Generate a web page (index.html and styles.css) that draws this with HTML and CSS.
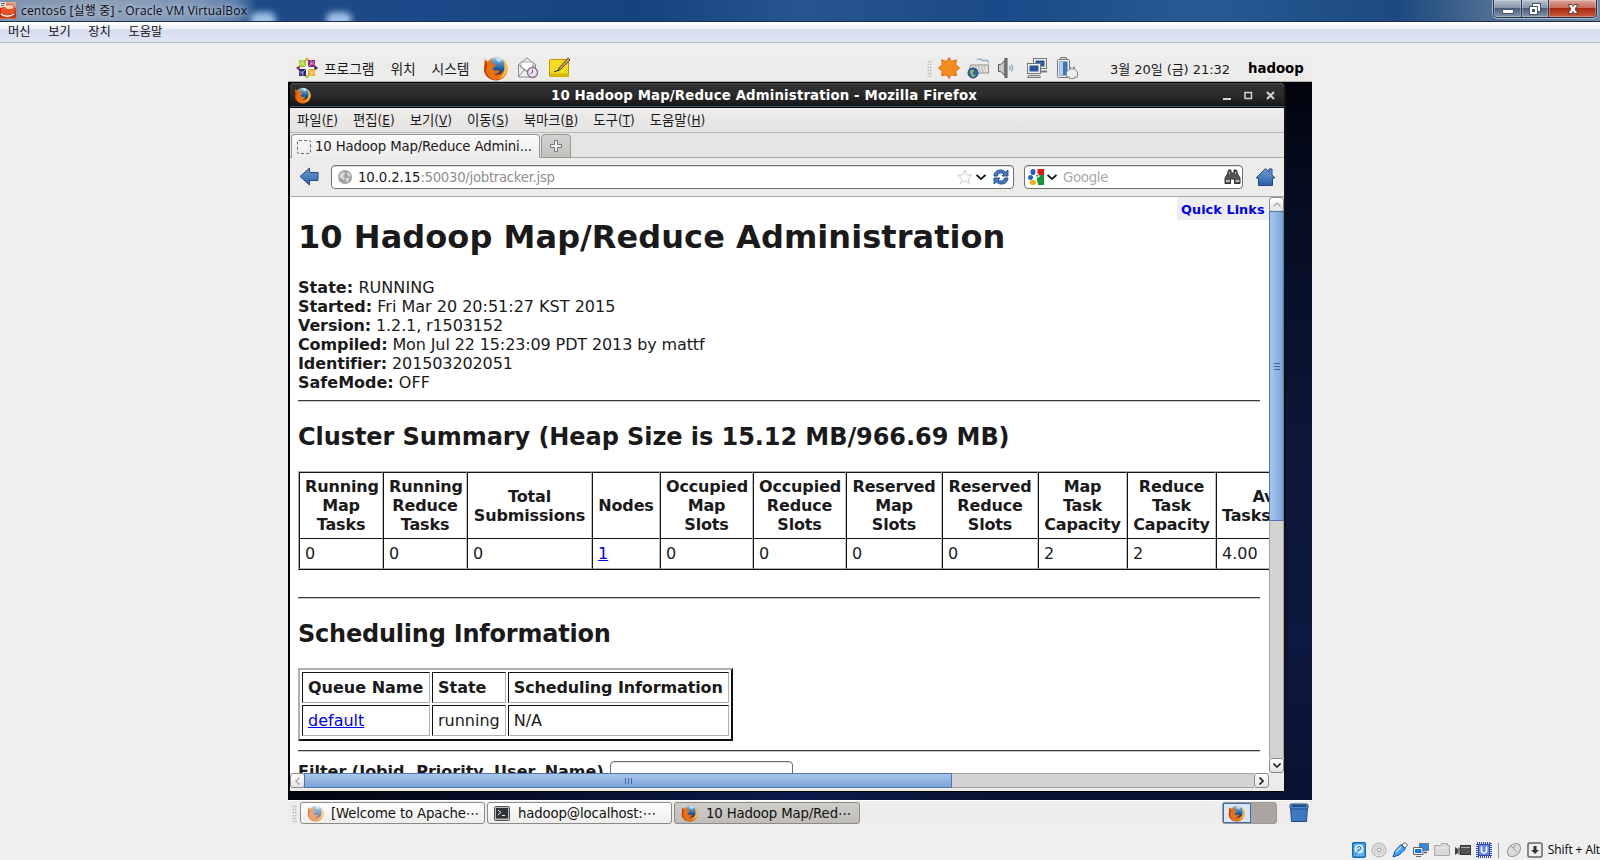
FILE: index.html
```html
<!DOCTYPE html>
<html lang="ko">
<head>
<meta charset="utf-8">
<title>centos6 - Oracle VM VirtualBox</title>
<link rel="stylesheet" href="styles.css">
</head>
<body>
<svg width="0" height="0" class="defs" aria-hidden="true">
  <defs>
    <linearGradient id="gOrange" x1="0" y1="0" x2="0" y2="1"><stop offset="0" stop-color="#f39a2b"/><stop offset="1" stop-color="#d0430b"/></linearGradient>
    <linearGradient id="gGlobe" x1="0" y1="0" x2="0" y2="1"><stop offset="0" stop-color="#8fcbf0"/><stop offset=".6" stop-color="#2463b0"/><stop offset="1" stop-color="#0f2f70"/></linearGradient>
    <linearGradient id="gBlue" x1="0" y1="0" x2="0" y2="1"><stop offset="0" stop-color="#6f9fd6"/><stop offset="1" stop-color="#2a60a5"/></linearGradient>
    <symbol id="firefox" viewBox="0 0 24 24">
      <circle cx="12.500" cy="12.500" r="11" fill="url(#gOrange)"/>
      <circle cx="13" cy="9.500" r="8.300" fill="url(#gGlobe)"/>
      <path d="M11 2c3-1 6 0 8 2-2 0-3 1-4 2-2-1-1-3-4-4z" fill="#c8e6f8"/>
      <path d="M19.500 3.500c3.500 3 5 8 3 12.500-2 4.500-7 7-12 6 6-1 10-4 10-11 0-3-.5-5-1-7.500z" fill="#f9bf36"/>
      <path d="M1.500 3C3 4 4 5 5 5.500 7 4 9 4 10 4.500 8.500 6 8.500 7 9 8l3.500.5c0 1.500-2 2-3 2.500-.5 2 1 3.500 4 3 1-.2 2 0 2.500.5-1 2-3 3-5.500 2.500 2 2.500 6 2 8.500-1-1 4.500-5 7-9.500 6.500C4 22 .5 16 1.500 10z" fill="#e8720f"/>
      <path d="M2 4l2 4-1 6c0 4 3 7 7 9C5 22 1 18 1 13z" fill="#c23c0a"/>
    </symbol>
  </defs>
</svg>

<header class="host-title">
  <svg class="vb-icon" width="16" height="18" viewBox="0 0 16 18"><rect x="0" y="1" width="16" height="17" fill="#d8a58f"/><path d="M0 7h16v10.500H0z" fill="#c8330c"/><path d="M1 11c0-5 3-8 8-8s7 3 6.500 6-5 4.500-8.500 4.500S1 13 1 11z" fill="#e8532a"/><ellipse cx="9.500" cy="6" rx="4" ry="2" fill="#ffd2bb"/><path d="M1 13c3 3 9 3 13 0" stroke="#fff" stroke-width="1.500" fill="none"/><path d="M0 1h6v5H0z" fill="#e9e2dc"/><path d="M1 2.500h4M1 4.500h3" stroke="#666"/></svg>
  <span class="host-caption">centos6 [실행 중] - Oracle VM VirtualBox</span>
  <span class="cloud"></span><span class="cloud"></span>
  <div class="win-buttons">
    <span class="wb min"><svg width="14" height="12" viewBox="0 0 14 12"><rect x="1.500" y="6.500" width="11" height="4" fill="#fff" stroke="#4a5468"/></svg></span>
    <span class="wb res"><svg width="14" height="14" viewBox="0 0 14 14"><rect x="4.500" y="1.500" width="8" height="8" fill="#fff" stroke="#4a5468"/><rect x="1.500" y="4.500" width="8" height="8" fill="#fff" stroke="#4a5468"/><rect x="4.500" y="7.500" width="2" height="2" fill="#4a5468" stroke="#4a5468"/></svg></span>
    <span class="wb close"><svg width="14" height="12" viewBox="0 0 14 12"><path d="M2 1.500h3.500L7 3.500l1.500-2H12L9 6l3 4.500H8.500L7 8.500l-1.500 2H2L5 6z" fill="#fff" stroke="#5a3a3e"/></svg></span>
  </div>
</header>
<nav class="host-menu"><span>머신</span><span>보기</span><span>장치</span><span>도움말</span></nav>

<main class="host-body">
<section class="guest">
  <div class="panel top">
    <svg class="centos" width="22" height="22" viewBox="0 0 22 22">
      <path d="M11 0l3 4H8z" fill="#efa724"/><path d="M8 18h6l-3 4z" fill="#9ccd2a"/><path d="M0 11l4-3v6z" fill="#932279"/><path d="M22 11l-4-3v6z" fill="#262577"/>
      <path d="M3 3h7v7H3z" fill="#9ccd2a"/><path d="M12 3h7v7h-7z" fill="#932279"/><path d="M3 12h7v7H3z" fill="#262577"/><path d="M12 12h7v7h-7z" fill="#efa724"/>
      <path d="M4 4l14 14M18 4L4 18M11 3v16M3 11h16M7 3v4H3M15 3v4h4M7 19v-4H3M15 19v-4h4" stroke="#fff" stroke-width=".8" fill="none" opacity=".7"/>
    </svg>
    <div class="gmenu"><span>프로그램</span><span>위치</span><span>시스템</span></div>
    <svg class="launch l1" width="25" height="25"><use href="#firefox"/></svg>
    <svg class="launch l2" width="22" height="22" viewBox="0 0 22 22"><path d="M1.500 7.500L10 1l8.500 6.500V20h-17z" fill="#eee" stroke="#8b8d89"/><path d="M4 5h12v6l-6 4-6-4z" fill="#fff" stroke="#aaa"/><path d="M1.500 19.500L8 12M2 8l8 6 8-6" stroke="#8b8d89" fill="none"/><circle cx="15.500" cy="15.500" r="5" fill="#eee3f1" stroke="#8a6a94" stroke-width="1.300"/><path d="M15.500 12.500v3l-2 1" stroke="#75507b" fill="none"/></svg>
    <svg class="launch l3" width="22" height="22" viewBox="0 0 22 22"><rect x=".5" y="2.500" width="19" height="17" rx="1" fill="#f7dc1e" stroke="#b59a06"/><path d="M1 16.500h19V20H1z" fill="#d4b606"/><path d="M9 14l1-3L19 1l2 2-9 9z" fill="#c6a25c" stroke="#5c4a20"/><path d="M5 15l5-2" stroke="#222"/></svg>
    <div class="tray">
      <span class="grip"></span>
      <svg class="t1" width="22" height="22" viewBox="0 0 22 22"><path d="M11 .7l2.500 3.800 4.900-1.600-.8 4.700 3.900 3.400-3.900 3 .8 4.700-4.900-.9L11 21.300l-2.500-3.500-4.900.9.800-4.700L.5 11l3.900-3.400-.8-4.700 4.900 1.600z" fill="#f68b1f" stroke="#d8690a"/></svg>
      <svg class="t2" width="23" height="22" viewBox="0 0 23 22"><path d="M10 2.500c4-2 4 2 8 1 4-1 2 1 4 2" stroke="#8fb0d8" fill="none" stroke-width="1.500"/><path d="M3.500 8h18v8h-20z" fill="#e8e8e6" stroke="#8b8d89"/><path d="M5 10h15M4.500 12h15M9 14h10" stroke="#a5a6a2" stroke-dasharray="2 1"/><circle cx="6" cy="16" r="5" fill="#3465a4" stroke="#204a87"/><path d="M3 14c2-2 4-1 4 0s-2 1-1 3 3 0 3 0-1 3-3 3-1-3-3-4z" fill="#8ac34a"/></svg>
      <svg class="t3" width="18" height="22" viewBox="0 0 18 22"><path d="M1.500 7.500h2L8 3.500v15l-4.500-4h-2z" fill="#c9cac7" stroke="#555753"/><rect x="8" y="1.500" width="2" height="19" fill="#888a85" stroke="#555753"/><path d="M12.500 9q1.500 2 0 4M14.500 7.500q2.500 3.500 0 7" stroke="#5f8fcb" fill="none"/></svg>
      <svg class="t4" width="22" height="22" viewBox="0 0 22 22"><rect x="7.500" y="1.500" width="13" height="10" fill="#eeeeec" stroke="#777"/><rect x="9.500" y="3.500" width="9" height="6" fill="#28559c"/><path d="M15 14.500h6" stroke="#777" stroke-width="2"/><rect x="1.500" y="6.500" width="13" height="10" fill="#eeeeec" stroke="#777"/><rect x="3.500" y="8.500" width="9" height="6" fill="#28559c"/><path d="M1.500 20.500l1-2h11l1 2z" fill="#ddd" stroke="#777"/></svg>
      <svg class="t5" width="22" height="22" viewBox="0 0 22 22"><path d="M4.500 2.500v-2h6v2" fill="#ddd" stroke="#777"/><rect x="1.500" y="2.500" width="12" height="18" rx="1" fill="#eee" stroke="#777"/><rect x="3.500" y="4.500" width="8" height="14" fill="#3f74b7"/><path d="M4 5h3v13H4z" fill="#b5cdea"/><path d="M10.500 20v-5l3-3v-2h1v2h3v-2h1v2l3 3v5h-3v1.500h-5V20z" fill="#eee" stroke="#888"/></svg>
    </div>
    <span class="clock">3월 20일 (금) 21:32</span>
    <b class="user">hadoop</b>
  </div>

  <div class="desktop">
    <div class="window">
      <div class="titlebar">
        <svg class="tb-icon" width="17" height="17"><use href="#firefox"/></svg>
        <b>10 Hadoop Map/Reduce Administration - Mozilla Firefox</b>
        <svg class="tb-buttons" width="56" height="12" viewBox="0 0 56 12"><g fill="none" stroke="#d3d3cf" stroke-width="2"><path d="M1 10h8"/><rect x="23" y="3.500" width="6.500" height="6" stroke-width="1.500"/><path d="M45 3l7 7M52 3l-7 7"/></g></svg>
      </div>
      <div class="ff-menu">
        <span>파일(<u>F</u>)</span><span>편집(<u>E</u>)</span><span>보기(<u>V</u>)</span><span>이동(<u>S</u>)</span><span>북마크(<u>B</u>)</span><span>도구(<u>T</u>)</span><span>도움말(<u>H</u>)</span>
      </div>
      <div class="tabs">
        <div class="tab"><i class="blank-icon"></i>10 Hadoop Map/Reduce Admini...</div>
        <div class="newtab"><svg width="12" height="12" viewBox="0 0 12 12"><path d="M4.500.5h3v4h4v3h-4v4h-3v-4h-4v-3h4z" fill="#eee" stroke="#777"/></svg></div>
      </div>
      <div class="navbar">
        <svg class="back" width="20" height="20" viewBox="0 0 20 20"><path d="M1 9.500L10.500 1v4.500H19v8h-8.500V18z" fill="url(#gBlue)" stroke="#204a87"/></svg>
        <div class="urlbox">
          <svg width="14" height="14" viewBox="0 0 14 14"><circle cx="7" cy="7" r="7" fill="#a3a3a1"/><path d="M1 7l2-4 3-1 1 2-2 2 2 2-1 2-3-2zM9 2l3 2v3l-2-1zM8 8l3 0-1 4-2-1z" fill="#dedddb"/></svg>
          <span class="url">10.0.2.15<em>:50030/jobtracker.jsp</em></span>
          <svg width="16" height="16" viewBox="0 0 16 16"><path d="M8 1l2 5h5l-4 3.500 1.500 5L8 11.500l-4.500 3 1.500-5L1 6h5z" fill="#fff" stroke="#ccc"/></svg>
          <svg class="chev" width="10" height="6" viewBox="0 0 10 6"><path d="M.5 1L5 5l4.500-4" fill="none" stroke="#1a1a1a" stroke-width="1.800"/></svg>
          <svg class="reload" width="16" height="16" viewBox="0 0 16 16"><path d="M1 7C1 1 9-1 12.500 3L15 1v6H9l2-2C8 3 5 4 4.500 7zM15 9c0 6-8 8-11.500 4L1 15V9h6l-2 2c3 2 6 1 6.500-2z" fill="#4a78bd" stroke="#1e478b" stroke-width=".9"/></svg>
        </div>
        <div class="searchbox">
          <svg width="16" height="16" viewBox="0 0 16 16"><rect width="16" height="16" fill="#fff"/><path d="M9 0h7v6H9z" fill="#e11"/><path d="M8 6h8v10H10z" fill="#119a3a"/><ellipse cx="5" cy="3" rx="2.500" ry="3" fill="#2455c9"/><ellipse cx="2.500" cy="8.500" rx="2.500" ry="2.500" fill="#2465d0"/><ellipse cx="5" cy="13.500" rx="3.500" ry="2.500" fill="#f6b21b"/><path d="M9 0v5l2 1v2H8l1 8" fill="none" stroke="#fff"/></svg>
          <svg class="chev" width="10" height="6" viewBox="0 0 10 6"><path d="M.5 1L5 5l4.500-4" fill="none" stroke="#1a1a1a" stroke-width="1.800"/></svg>
          <span class="ph">Google</span>
          <svg width="17" height="16" viewBox="0 0 17 16"><path d="M4.500 1h2.500v3h3V1h2.500l1 4L16 9v5.500h-5.500V10h-4v4.500H1V9l2.500-4z" fill="#555753" stroke="#2e3436"/><path d="M2 12h4M11.500 12h4M5 4h1M11 4h1" stroke="#d3d7cf" stroke-width="1.500"/></svg>
        </div>
        <svg class="home" width="21" height="20" viewBox="0 0 21 20"><path d="M3.500 18.500V11H1l9.500-9.500L14 5V2h3v6l3 3h-2.500v7.500z" fill="url(#gBlue)" stroke="#204a87"/></svg>
      </div>

      <div class="viewport">
        <div class="page">
          <a class="quick">Quick Links</a>
          <h1>10 Hadoop Map/Reduce Administration</h1>
          <div class="info">
            <div class="loose"><b>State:</b> RUNNING</div>
            <div><b>Started:</b> Fri Mar 20 20:51:27 KST 2015</div>
            <div class="tight"><b>Version:</b> 1.2.1, r1503152</div>
            <div class="tight"><b>Compiled:</b> Mon Jul 22 15:23:09 PDT 2013 by mattf</div>
            <div class="tight"><b>Identifier:</b> 201503202051</div>
            <div><b>SafeMode:</b> OFF</div>
          </div>
          <hr>
          <h2>Cluster Summary (Heap Size is 15.12 MB/966.69 MB)</h2>
          <table class="cluster">
            <colgroup><col class="w84"><col class="w84"><col class="w125"><col class="w68"><col class="w93"><col class="w93"><col class="w96"><col class="w96"><col class="w89"><col class="w89"><col class="w112"></colgroup>
            <tr><th>Running Map Tasks</th><th>Running Reduce Tasks</th><th>Total Submissions</th><th>Nodes</th><th>Occupied Map Slots</th><th>Occupied Reduce Slots</th><th>Reserved Map Slots</th><th>Reserved Reduce Slots</th><th>Map Task Capacity</th><th>Reduce Task Capacity</th><th>Avg. Tasks/Node</th></tr>
            <tr><td>0</td><td>0</td><td>0</td><td><a>1</a></td><td>0</td><td>0</td><td>0</td><td>0</td><td>2</td><td>2</td><td>4.00</td></tr>
          </table>
          <hr class="second">
          <h2 class="tighter">Scheduling Information</h2>
          <table class="sched">
            <tr><th>Queue Name</th><th>State</th><th>Scheduling Information</th></tr>
            <tr><td><a>default</a></td><td>running</td><td>N/A</td></tr>
          </table>
          <hr class="third">
          <div class="filter"><b>Filter (Jobid, Priority, User, Name)</b><span class="field"></span></div>
        </div>
        <div class="vscroll">
          <span class="sbtn"><svg width="8" height="5" viewBox="0 0 8 5"><path d="M.5 4.500L4 1l3.500 3.500" fill="none" stroke="#aaa" stroke-width="1.400"/></svg></span>
          <span class="vthumb"><i></i></span><span class="vtrack"></span>
          <span class="sbtn"><svg width="8" height="5" viewBox="0 0 8 5"><path d="M.5.5L4 4 7.500.5" fill="none" stroke="#222" stroke-width="1.600"/></svg></span>
        </div>
        <div class="hscroll">
          <span class="sbtn"><svg width="5" height="8" viewBox="0 0 5 8"><path d="M4.500.5L1 4l3.500 3.500" fill="none" stroke="#aaa" stroke-width="1.400"/></svg></span>
          <span class="hthumb"><i></i></span><span class="htrack"></span>
          <span class="sbtn"><svg width="5" height="8" viewBox="0 0 5 8"><path d="M.5.5L4 4 .5 7.500" fill="none" stroke="#222" stroke-width="1.600"/></svg></span>
        </div>
      </div>
    </div>
  </div>

  <div class="panel bottom">
    <span class="grip"></span>
    <div class="task"><svg class="faded" width="17" height="17"><use href="#firefox"/></svg><span>[Welcome to Apache⋯</span></div>
    <div class="task"><svg width="16" height="15" viewBox="0 0 16 15"><rect x=".5" y=".5" width="15" height="14" rx="1" fill="#bbb" stroke="#555"/><rect x="2" y="2" width="12" height="10.500" fill="#2e3436"/><path d="M4 4l3 2.500L4 9M8 9.500h3" stroke="#eee" fill="none"/></svg><span>hadoop@localhost:⋯</span></div>
    <div class="task active"><svg width="17" height="17"><use href="#firefox"/></svg><span>10 Hadoop Map/Red⋯</span></div>
    <div class="pager"><span class="ws on"><svg width="17" height="17"><use href="#firefox"/></svg></span><span class="ws"></span></div>
    <svg class="trash" width="20" height="20" viewBox="0 0 20 20"><path d="M1.500 4l1 14.500h15L18.500 4z" fill="#3e78c0" stroke="#204a87"/><rect x="1" y="1" width="18" height="5" rx="1.500" fill="#4e86c9" stroke="#204a87"/><path d="M3 3h14" stroke="#183a6b" stroke-width="1.500"/></svg>
  </div>
</section>
</main>

<footer class="host-status">
  <svg width="14" height="16" viewBox="0 0 14 16"><rect x=".75" y=".75" width="12.500" height="14.500" rx="1" fill="#5fb4ee" stroke="#1269b5" stroke-width="1.500"/><circle cx="7" cy="7" r="4" fill="#bfe2fa" stroke="#fff"/><path d="M3 13l4-5M5 6c1-2 4-2 4 0s-3 3-3 1" stroke="#1269b5" fill="none"/></svg>
  <svg width="16" height="16" viewBox="0 0 16 16"><circle cx="8" cy="8" r="7" fill="#e3e3e3" stroke="#aaa"/><circle cx="8" cy="8" r="2" fill="#f5f5f5" stroke="#999"/><circle cx="8" cy="8" r="4.500" fill="none" stroke="#c5c5c5"/></svg>
  <svg width="16" height="16" viewBox="0 0 16 16"><path d="M10 3l3-2.500L15.500 3 13 6z" fill="#fff" stroke="#555"/><path d="M1 15l2-6 6-6.500L13.500 7 7 13z" fill="#44a5f0" stroke="#1356a6"/><path d="M4 10l5-5" stroke="#bfe2ff" stroke-width="1.500"/></svg>
  <svg width="16" height="16" viewBox="0 0 16 16"><rect x="6.500" y="1.500" width="9" height="7" fill="#2a8cf0" stroke="#7b7b7b"/><path d="M11 10.500h3" stroke="#555" stroke-width="1.500"/><path d="M.5 5.500h9.500v7H.5z" fill="#1678ea" stroke="#666"/><path d="M1.500 6.500h7.500v5H1.500z" fill="none" stroke="#fff"/><path d="M3 14.500h5" stroke="#666"/></svg>
  <svg width="16" height="16" viewBox="0 0 16 16"><path d="M.5 13.500v-10h6l1-2h6v2h2v10z" fill="#d8d8d8" stroke="#aaa"/><path d="M2 6h12" stroke="#eee"/></svg>
  <svg width="16" height="16" viewBox="0 0 16 16"><path d="M0 5l3 2v4l-3 2z" fill="#444"/><path d="M3 5.500h2v7H3z" fill="#888"/><rect x="5.500" y="3.500" width="10" height="9" fill="#555" stroke="#333"/><path d="M6 5.500h9" stroke="#aaa"/></svg>
  <svg width="16" height="16" viewBox="0 0 16 16"><rect x="1" y="1" width="14" height="14" fill="none" stroke="#3948a8" stroke-width="2" stroke-dasharray="1 1"/><rect x="2.500" y="2.500" width="11" height="11" fill="#6488e6" stroke="#3246b3"/><path d="M5.500 4.500v5q2.500 3 5 0v-5" stroke="#fff" stroke-width="1.700" fill="none"/></svg>
  <i class="sep"></i>
  <svg width="16" height="16" viewBox="0 0 16 16"><ellipse cx="8" cy="8" rx="5.500" ry="7.500" transform="rotate(45 8 8)" fill="#dcdcdc" stroke="#999"/><path d="M5 4l6 6M10 3L7 6" stroke="#999"/></svg>
  <svg width="16" height="16" viewBox="0 0 16 16"><rect x="1" y="1" width="14" height="14" rx="1.500" fill="#eee" stroke="#666" stroke-width="1.500"/><path d="M6.500 4h3v4H12l-4 4-4-4h2.500z" fill="#333"/></svg>
  <span>Shift + Alt</span>
</footer>
</body>
</html>
```
FILE: styles.css
```css
* { box-sizing: border-box; }
body { margin: 0; width: 1600px; height: 860px; overflow: hidden; background: #efefef; font-family: "DejaVu Sans", "Noto Sans CJK KR", sans-serif; color: #1a1a1a; display: flex; flex-direction: column; position: relative; }
svg { display: block; flex: none; }
.defs { position: absolute; }

/* host window */
.host-title { height: 22px; display: flex; align-items: flex-start; overflow: hidden; border-bottom: 1px solid #1a2c47; background: linear-gradient(90deg, #7e92ad 0, #8b9db6 120px, #7892b4 200px, #5a7da9 236px, #1d4a86 258px, #1c4a88 420px, #14437f 640px, #27558f 800px, #1a4a87 1000px, #285a94 1200px, #1c4a80 1400px, #5b7595 1510px, #7088a5 1600px); }
.vb-icon { margin-top: 1px; }
.host-caption { margin-left: 5px; width: 229px; font: 12px/21px "Open Sans", "Noto Sans CJK KR", sans-serif; letter-spacing: .18px; white-space: nowrap; color: #0c0c12; text-shadow: 0 0 5px #c4d0e0, 0 0 8px #c4d0e0; }
.cloud { width: 26px; height: 16px; margin: 12px 50px 0 0; border-radius: 10px; background: #9fc0e6; filter: blur(3px); }
.win-buttons { margin-left: auto; margin-right: 3px; display: flex; height: 18px; border: 1px solid #25354d; border-top: 0; border-radius: 0 0 5px 5px; box-shadow: 0 0 0 1px #a6b6ca; overflow: hidden; }
.wb { display: flex; align-items: center; justify-content: center; width: 27px; background: linear-gradient(#b6c1ce, #8795aa 45%, #4a5e7c 50%, #8396ad); border-right: 1px solid #2b3b54; box-shadow: inset 0 0 0 1px #ffffff44; }
.wb.min { width: 28px; }
.wb.close { width: 47px; border: 0; background: linear-gradient(#dba79d, #c86a58 45%, #a92810 50%, #c95a3c); }
.host-menu { height: 21px; display: flex; gap: 17.500px; padding-left: 8px; font: 12.300px/19px "Noto Sans CJK KR", sans-serif; color: #111; background: linear-gradient(#fff 0, #edf0f8 7px, #d5dbee 8px, #e1e6f6 100%); border-bottom: 1px solid #b6bccc; }
.host-body { padding: 14px 288px 0; }
.host-status { position: absolute; right: 0; top: 842px; display: flex; align-items: center; gap: 5px; height: 16px; font: 12px/16px "Open Sans", "Noto Sans", sans-serif; letter-spacing: -.1px; white-space: nowrap; color: #000; }
.host-status .sep { width: 1px; height: 15px; background: #999; margin: 0 2px 0 1px; }

/* guest desktop */
.guest { width: 1024px; height: 768px; display: flex; flex-direction: column; }
.panel { display: flex; align-items: center; background: #edeceb; font-size: 13px; flex: none; }
.panel.top { height: 25px; border-bottom: 1px solid #b2b0ad; padding: 0 6px 2px 8px; }
.gmenu { display: flex; gap: 16px; margin-left: 6px; font-family: "Noto Sans CJK KR", sans-serif; font-size: 13.800px; line-height: 22px; letter-spacing: -.1px; white-space: nowrap; color: #1a1a1a; }
.launch.l1 { margin-left: 14px; margin-top: 1px; }
.launch.l2 { margin-left: 9px; }
.launch.l3 { margin-left: 10px; }
.tray { display: flex; align-items: center; margin-left: auto; }
.grip { width: 5px; height: 17px; background-image: radial-gradient(#b2b0ad 0.700px, transparent 0.900px); background-size: 2.500px 3px; flex: none; }
.t1 { margin-left: 6px; }
.t2 { margin-left: 7px; }
.t3 { margin-left: 7px; }
.t4 { margin-left: 11px; }
.t5 { margin-left: 8px; }
.clock { margin-left: 32px; font-size: 13px; width: 119px; white-space: nowrap; letter-spacing: -.05px; }
.user { margin-left: 19px; font-size: 13.300px; color: #000; width: 58px; }
.desktop { height: 718px; flex: none; background: linear-gradient(90deg, #02040c 0, #0b1a4a 50%, transparent 70%) bottom / 100% 9px no-repeat, linear-gradient(#02030c 0, #050c20 100px, #0c1738 360px, #0d1840 560px, #0a1230); }
.window { width: 998px; height: 710px; background: #edeceb; border: 1px solid #000; border-left-width: 2px; border-right: 2px solid #111; border-radius: 6px 6px 0 0; overflow: hidden; display: flex; flex-direction: column; }
.titlebar { height: 25px; flex: none; display: flex; align-items: center; background: linear-gradient(#4c4c4c 0, #303030 2px, #2c2c2c 50%, #161616 95%); border-bottom: 1px solid #000; box-shadow: inset 0 -1px 0 #3e5876; color: #fff; font-size: 13.300px; white-space: nowrap; padding-left: 4px; }
.titlebar b { margin-left: 240px; width: 430px; line-height: 23px; letter-spacing: .15px; }
.tb-buttons { margin-left: auto; margin-right: 6px; }
.ff-menu { height: 25px; flex: none; display: flex; gap: 15px; padding-left: 7px; font: 13.400px/25px "DejaVu Sans Condensed", "DejaVu Sans", "Noto Sans CJK KR", sans-serif; white-space: nowrap; background: linear-gradient(#eeedec, #e4e3e1); border-bottom: 1px solid #bbb9b6; }
.tabs { height: 25px; flex: none; display: flex; align-items: flex-end; background: #e6e5e3; box-shadow: inset 0 -1px 0 #aaa8a5; padding-left: 1px; }
.tab { width: 249px; height: 24px; border: 1px solid #999794; border-bottom: 0; border-radius: 4px 4px 0 0; background: linear-gradient(#fafafa, #edeceb); display: flex; align-items: center; gap: 4px; padding-left: 5px; font-size: 13.300px; letter-spacing: -.15px; white-space: nowrap; }
.blank-icon { width: 14px; height: 14px; border: 1px dashed #666; border-radius: 2px; }
.newtab { width: 30px; height: 24px; margin-left: 1px; border: 1px solid #999794; border-radius: 4px 4px 0 0; background: linear-gradient(#d4d2d0, #c4c2bf); display: flex; align-items: center; justify-content: center; }
.navbar { height: 39px; flex: none; display: flex; align-items: center; background: #edeceb; border-bottom: 1px solid #aaa7a2; padding: 0 8px 0 9px; }
.urlbox, .searchbox { height: 24px; border: 1px solid #72706c; border-radius: 4px; background: #fff; display: flex; align-items: center; box-shadow: inset 0 1px 0 #ddd; }
.urlbox { margin-left: 12px; width: 683px; padding: 0 4px 0 6px; font-size: 13.300px; }
.url { margin: 0 auto 0 6px; color: #1a1a1a; letter-spacing: -.12px; }
.url em { font-style: normal; color: #8e8e8e; letter-spacing: -.3px; }
.chev { margin-left: 3px; }
.reload { margin-left: 7px; }
.searchbox { margin-left: 10px; width: 219px; padding: 0 1px 0 3px; font-size: 13.300px; }
.ph { color: #a9a9a9; margin: 0 auto 0 6px; letter-spacing: -.3px; }
.home { margin-left: auto; }

/* page */
.viewport { display: grid; grid-template-columns: 979px 15px; grid-template-rows: 576px 15px; height: 594px; }
.page { position: relative; overflow: hidden; background: #fff; padding: 0 9px 0 8px; font-size: 16px; line-height: 19px; }
.quick { position: absolute; right: 0; top: 0; width: 92px; height: 23px; padding-left: 4px; background: #eee; color: #00e; font-weight: bold; font-size: 12.800px; line-height: 25px; letter-spacing: .08px; white-space: nowrap; }
h1 { margin: 21px 0 22px; font-size: 32px; line-height: 38px; letter-spacing: .06px; white-space: nowrap; }
.info .loose { letter-spacing: .06px; }
.info .tight { letter-spacing: -.12px; }
hr { margin: 8px 0; height: 2px; border: 0; border-top: 1px solid #3c3c3c; border-bottom: 1px solid #c8c8c8; }
h2 { margin: 21px 0 19px; font-size: 24px; line-height: 29px; letter-spacing: -.07px; }
h2.tighter { letter-spacing: -.22px; }
a { color: #00e; text-decoration: underline; }
.quick { text-decoration: none; }
.cluster { width: 1029px; table-layout: fixed; border-collapse: separate; border-spacing: 0; border-top: 1px solid #b0b0b0; border-left: 1px solid #b0b0b0; border-bottom: 1px solid #111; }
.cluster th, .cluster td { border-left: 1px solid #111; border-right: 1px solid #c0c0c0; border-top: 1px solid #111; padding: 4px 5px; }
.cluster th { height: 66px; letter-spacing: -.15px; }
.cluster td { height: 31px; border-bottom: 1px solid #b0b0b0; }
.w84 { width: 84px; } .w125 { width: 125px; } .w68 { width: 68px; } .w93 { width: 93px; } .w96 { width: 96px; } .w89 { width: 89px; } .w112 { width: 112px; }
.second { margin: 27px 0 0; }
.sched { border: 2px solid; border-color: #b0b0b0 #111 #111 #b0b0b0; border-spacing: 2px; border-collapse: separate; padding-bottom: 1px; }
.sched th, .sched td { border: 1px solid; border-color: #111 #b0b0b0 #b0b0b0 #111; padding: 5px; text-align: left; white-space: nowrap; }
.sched th { letter-spacing: -.12px; }
.sched th:first-child { width: 128px; letter-spacing: 0; }
.sched th:nth-child(2) { letter-spacing: 0; }
.third { margin: 9px 0 8px; }
.filter { display: flex; align-items: center; gap: 6px; height: 29px; white-space: nowrap; }
.filter b { margin-bottom: 6px; }
.field { width: 183px; height: 27px; border: 1px solid #72706c; border-radius: 4px; background: #fff; box-shadow: inset 0 1px 0 #ddd; }

/* scrollbars */
.vscroll { display: flex; flex-direction: column; background: #edeceb; }
.hscroll { display: flex; }
.sbtn { width: 15px; height: 15px; flex: none; display: flex; align-items: center; justify-content: center; border: 1px solid #8d8b88; border-radius: 3px; background: linear-gradient(#fff, #e4e3e1); }
.vthumb { height: 310px; margin-top: -1px; border: 1px solid #4f79ae; background: linear-gradient(90deg, #a9c6ec, #7ba3d6); display: flex; align-items: center; justify-content: center; }
.vthumb i { width: 6px; height: 7px; border: solid #3f6aa5; border-width: 1px 0; background: linear-gradient(#3f6aa5, #3f6aa5) 0 2px / 6px 1px no-repeat; }
.vtrack { flex: 1; background: #d5d3d1; border: solid #a5a3a0; border-width: 0 1px; }
.hthumb { width: 648px; margin-left: -1px; border: 1px solid #4f79ae; background: linear-gradient(#a9c6ec, #7ba3d6); display: flex; align-items: center; justify-content: center; }
.hthumb i { width: 7px; height: 6px; border: solid #3f6aa5; border-width: 0 1px; background: linear-gradient(#3f6aa5, #3f6aa5) 2px 0 / 1px 6px no-repeat; }
.htrack { flex: 1; background: #d5d3d1; border: solid #a5a3a0; border-width: 1px 0; }

/* taskbar */
.panel.bottom { height: 25px; border-top: 1px solid #fff; padding-left: 4px; padding-right: 3px; }
.task { width: 185px; height: 22px; margin-right: 2px; border: 1px solid #8d8b88; border-radius: 3px; background: linear-gradient(#fff, #eeedec); display: flex; align-items: center; gap: 7px; padding-left: 6px; font-size: 13.300px; letter-spacing: -.15px; white-space: nowrap; color: #111; }
.panel.bottom .grip { margin-right: 3px; }
.task + .task span { margin-left: 1px; }
.task.active { width: 186px; background: linear-gradient(#cfcdca, #bfbcb9); }
.faded { opacity: .6; }
.pager { margin-left: auto; display: flex; width: 55px; height: 22px; border: 1px solid #999; border-radius: 3px; background: #aaa5a1; }
.ws { flex: 1; display: flex; align-items: center; justify-content: center; }
.ws.on { border: 1px solid #3b6fae; background: #dbe6f5; }
.trash { margin-left: 12px; }
```
